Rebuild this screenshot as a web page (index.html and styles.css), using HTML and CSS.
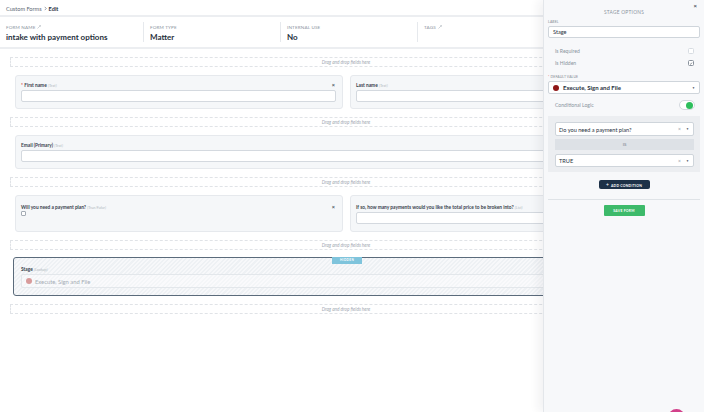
FILE: index.html
```html
<!DOCTYPE html>
<html>
<head>
<meta charset="utf-8">
<title>Edit form</title>
<link rel="stylesheet" href="styles.css">
</head>
<body>
<div class="page">
  <nav class="crumbs">
    <span class="crumb-link">Custom Forms</span>
    <svg class="crumb-sep" viewBox="0 0 4 6" width="3" height="5"><path d="M1 0.8 L3 3 L1 5.2" fill="none" stroke="#5d6773" stroke-width="0.8"/></svg>
    <span class="crumb-cur">Edit</span>
  </nav>

  <header class="meta">
    <div class="meta-col">
      <div class="meta-label">Form Name <svg class="edit-ico" viewBox="0 0 5 5" width="4" height="4"><path d="M0.6 4.4 L4.2 0.8 M2.8 0.7 L4.3 0.7 L4.3 2.2" fill="none" stroke="#9aa3ad" stroke-width="0.6"/></svg></div>
      <div class="meta-value">intake with payment options</div>
    </div>
    <div class="meta-col">
      <div class="meta-label">Form Type</div>
      <div class="meta-value">Matter</div>
    </div>
    <div class="meta-col">
      <div class="meta-label">Internal Use</div>
      <div class="meta-value">No</div>
    </div>
    <div class="meta-col">
      <div class="meta-label">Tags <svg class="edit-ico" viewBox="0 0 5 5" width="4" height="4"><path d="M0.6 4.4 L4.2 0.8 M2.8 0.7 L4.3 0.7 L4.3 2.2" fill="none" stroke="#9aa3ad" stroke-width="0.6"/></svg></div>
      <div class="meta-value"></div>
    </div>
  </header>

  <main class="canvas">
    <div class="dropzone">Drag and drop fields here</div>

    <div class="row">
      <div class="field">
        <div class="field-head"><span class="field-label"><span class="req">*</span> First name <em>(Text)</em></span><span class="remove">×</span></div>
        <div class="input"></div>
      </div>
      <div class="field">
        <div class="field-head"><span class="field-label">Last name <em>(Text)</em></span><span class="remove">×</span></div>
        <div class="input"></div>
      </div>
    </div>

    <div class="dropzone">Drag and drop fields here</div>

    <div class="row">
      <div class="field">
        <div class="field-head"><span class="field-label">Email (Primary) <em>(Text)</em></span></div>
        <div class="input"></div>
      </div>
    </div>

    <div class="dropzone">Drag and drop fields here</div>

    <div class="row row-tall">
      <div class="field">
        <div class="field-head"><span class="field-label">Will you need a payment plan? <em>(True/False)</em></span><span class="remove">×</span></div>
        <div class="checkbox"></div>
      </div>
      <div class="field">
        <div class="field-head"><span class="field-label">If so, how many payments would you like the total price to be broken into? <em>(List)</em></span><span class="remove">×</span></div>
        <div class="input"></div>
      </div>
    </div>

    <div class="dropzone">Drag and drop fields here</div>

    <div class="stage-card">
      <span class="hidden-badge">HIDDEN</span>
      <div class="field-head"><span class="field-label">Stage <em>(Lookup)</em></span></div>
      <div class="stage-input"><span class="dot dot-faded"></span><span>Execute, Sign and File</span></div>
    </div>

    <div class="dropzone">Drag and drop fields here</div>
  </main>
</div>

<aside class="panel">
  <div class="panel-close">×</div>
  <div class="panel-title">Stage Options</div>

  <div class="small-label">Label</div>
  <div class="text-input">Stage</div>

  <div class="opt-row opt-first"><span>Is Required</span><span class="pcheck"></span></div>
  <div class="opt-row"><span>Is Hidden</span><span class="pcheck pcheck-on"><svg viewBox="0 0 6 6" width="5" height="5"><path d="M1.4 3.2 L2.5 4.2 L4.6 1.6" fill="none" stroke="#3a4450" stroke-width="0.8"/></svg></span></div>

  <div class="small-label dv-label"><span class="req">*</span> Default Value</div>
  <div class="select select-main">
    <span class="dot dot-dark"></span><span class="select-text">Execute, Sign and File</span>
    <span class="caret">▼</span>
  </div>

  <div class="opt-row cond-row"><span>Conditional Logic</span><span class="toggle"><span class="knob"></span></span></div>

  <div class="cond-box">
    <div class="select cond-select"><span class="select-text plain">Do you need a payment plan?</span><span class="clear">×</span><span class="caret">▼</span></div>
    <div class="is-bar">IS</div>
    <div class="select cond-select cond-select2"><span class="select-text plain">TRUE</span><span class="clear">×</span><span class="caret">▼</span></div>
  </div>

  <button class="btn-add"><span class="plus">+</span> ADD CONDITION</button>
  <div class="panel-sep"></div>
  <button class="btn-save">SAVE FORM</button>

  <span class="chat-bubble"></span>
</aside>
</body>
</html>
```
FILE: styles.css
```css
* { box-sizing: border-box; margin: 0; padding: 0; }

html, body {
  width: 704px;
  height: 412px;
  overflow: hidden;
  background: #ffffff;
}

body {
  position: relative;
  font-family: Lato, "Open Sans", "Liberation Sans", sans-serif;
  color: #27313d;
}

.page { width: 704px; }

/* breadcrumb */
.crumbs {
  height: 17px;
  display: flex;
  align-items: center;
  gap: 2px;
  padding: 2px 6px 0;
  font-size: 5.6px;
  color: #5d6773;
  border-bottom: 2px solid #eceef1;
}
.crumb-cur { font-weight: 700; color: #27313d; }

/* meta header */
.meta {
  display: flex;
  height: 32px;
  border-bottom: 2px solid #eceef1;
}
.meta-col {
  width: 137px;
  margin: 5px 0 5px;
  padding: 2px 6px 0;
  border-left: 1px solid #e6e9ed;
}
.meta-col:first-child { width: 143px; border-left: 0; }
.meta-label {
  display: flex;
  align-items: center;
  gap: 2px;
  height: 6px;
  font-size: 4.6px;
  letter-spacing: 0.15px;
  text-transform: uppercase;
  color: #8b949e;
}
.meta-value {
  margin-top: 2px;
  height: 10px;
  line-height: 10px;
  font-size: 8px;
  font-weight: 700;
  color: #27313d;
}

/* canvas */
.canvas {
  display: flex;
  flex-direction: column;
  gap: 8px;
  padding: 8px 22px 0 10px;
}
.dropzone {
  height: 10px;
  border: 1px dashed #e0e3e7;
  text-align: center;
  font-size: 4.7px;
  line-height: 8px;
  font-style: italic;
  color: #a3aab3;
}
.row {
  display: flex;
  gap: 7px;
  margin: 0 4px 0 5px;
}
.row-tall .field { min-height: 37px; padding-top: 8px; }

.field {
  flex: 1;
  background: #f5f7f9;
  border: 1px solid #e6e9ed;
  border-radius: 3px;
  padding: 6px 6px 6px 5px;
}
.field-head {
  display: flex;
  justify-content: space-between;
  align-items: center;
  height: 6px;
  padding-right: 1px;
}
.field-label {
  font-size: 4.8px;
  font-weight: 700;
  color: #38414c;
  white-space: nowrap;
}
.field-label em {
  font-weight: 400;
  font-size: 3.9px;
  color: #b3bac2;
}
.req { color: #d9534f; }
.remove {
  font-size: 5.5px;
  font-weight: 700;
  color: #4a5461;
  line-height: 6px;
}
.input {
  margin-top: 2px;
  height: 12px;
  background: #ffffff;
  border: 1px solid #d4d9df;
  border-radius: 2px;
}
.checkbox {
  margin-top: 1px;
  width: 5px;
  height: 5px;
  border: 0.7px solid #a4acb5;
  border-radius: 1px;
  background: #fff;
}

/* stage (hidden) card */
.stage-card {
  position: relative;
  margin: -1px 1px 0 3px;
  height: 39px;
  border: 1px solid #5b6b7b;
  border-radius: 3px;
  padding: 8px 7px 0 7px;
  background: repeating-linear-gradient(135deg, #f7f8fa 0 1.5px, #eef1f4 1.5px 3px);
}
.hidden-badge {
  position: absolute;
  top: -1px;
  left: 50%;
  transform: translateX(-50%);
  width: 30px;
  height: 7px;
  background: #7fc4dc;
  color: #ffffff;
  font-size: 3px;
  font-weight: 700;
  letter-spacing: 0.4px;
  line-height: 7px;
  text-align: center;
}
.stage-input {
  margin-top: 2px;
  height: 14px;
  display: flex;
  align-items: center;
  gap: 3px;
  padding-left: 4px;
  border: 1px solid #e3e7eb;
  border-radius: 2px;
  background: rgba(255, 255, 255, 0.35);
  font-size: 5.8px;
  color: #a6adb5;
}
.dot {
  display: inline-block;
  width: 6px;
  height: 6px;
  border-radius: 50%;
  flex: none;
}
.dot-faded { background: #d89b9b; }
.dot-dark { background: #8e1616; }

/* right panel */
.panel {
  position: absolute;
  top: 0;
  right: 0;
  width: 161px;
  height: 412px;
  background: #f7f8fa;
  border-left: 1px solid #e3e6ea;
  box-shadow: -5px 0 9px rgba(30, 40, 55, 0.06);
  padding: 0 4px 0 4px;
  display: flex;
  flex-direction: column;
}
.panel-close {
  height: 9px;
  padding-top: 2px;
  text-align: right;
  padding-right: 3px;
  font-size: 6px;
  line-height: 7px;
  font-weight: 700;
  color: #4a5461;
}
.panel-title {
  height: 7px;
  line-height: 7px;
  text-align: center;
  font-size: 4.8px;
  letter-spacing: 0.25px;
  text-transform: uppercase;
  color: #8b949e;
}
.small-label {
  margin-top: 4px;
  height: 4px;
  line-height: 4px;
  font-size: 3.4px;
  text-transform: uppercase;
  letter-spacing: 0.15px;
  color: #7d8690;
}
.text-input {
  margin-top: 2px;
  height: 12px;
  background: #ffffff;
  border: 1px solid #cfd5db;
  border-radius: 2px;
  padding-left: 4px;
  font-size: 5.6px;
  line-height: 10px;
  color: #27313d;
}
.opt-row {
  margin-top: 2px;
  height: 10px;
  display: flex;
  justify-content: space-between;
  align-items: center;
  padding: 0 6px 0 7px;
  font-size: 5.1px;
  color: #8a949e;
}
.opt-first { margin-top: 8px; }
.pcheck {
  width: 6px;
  height: 6px;
  border: 0.7px solid #d7dce2;
  border-radius: 1.5px;
  background: #fff;
  display: flex;
  align-items: center;
  justify-content: center;
}
.pcheck-on { border-color: #8a939d; }
.dv-label { margin-top: 7px; }

.select {
  margin-top: 2px;
  height: 13px;
  display: flex;
  align-items: center;
  gap: 4px;
  background: #ffffff;
  border: 1px solid #cfd5db;
  border-radius: 2px;
  padding: 0 4px 0 4px;
}
.select-text {
  flex: 1;
  font-size: 6px;
  font-weight: 700;
  color: #27313d;
  white-space: nowrap;
}
.select-text.plain { font-weight: 400; font-size: 5.6px; }
.caret { font-size: 3px; color: #3a4450; }
.clear { font-size: 5px; color: #8a939d; margin-right: 1px; }

.cond-row { margin-top: 6px; }
.toggle {
  position: relative;
  width: 16px;
  height: 10px;
  border-radius: 5px;
  background: #ffffff;
  border: 0.7px solid #d4d9df;
  margin-right: -1px;
}
.knob {
  position: absolute;
  right: 1px;
  top: 1px;
  width: 7px;
  height: 7px;
  border-radius: 50%;
  background: #2dbe5c;
}

.cond-box {
  margin-top: 6px;
  background: #eceef1;
  padding: 6px 6px 5px 7px;
}
.cond-box .select { margin-top: 0; height: 14px; padding-left: 3px; }
.cond-box .cond-select2 { margin-top: 4px; height: 13px; }
.is-bar {
  margin-top: 3px;
  height: 11px;
  background: #dde1e6;
  text-align: center;
  font-size: 4.4px;
  line-height: 11px;
  color: #6f7985;
}

.btn-add {
  align-self: center;
  margin-top: 8px;
  width: 51px;
  height: 9px;
  border: 0;
  border-radius: 2px;
  background: #1d3148;
  color: #ffffff;
  font-family: inherit;
  font-size: 3.4px;
  font-weight: 700;
  letter-spacing: 0.25px;
}
.plus { font-size: 5px; font-weight: 400; vertical-align: -0.5px; margin-right: 1px; }
.panel-sep {
  margin-top: 10px;
  height: 1px;
  background: #dfe3e7;
}
.btn-save {
  align-self: center;
  margin-top: 5px;
  width: 41px;
  height: 11px;
  border: 0;
  border-radius: 1px;
  background: #3dba6a;
  color: #ffffff;
  font-family: inherit;
  font-size: 3.4px;
  font-weight: 700;
  letter-spacing: 0.25px;
}
.chat-bubble {
  position: absolute;
  left: 124px;
  top: 409px;
  width: 17px;
  height: 17px;
  border-radius: 50%;
  background: #d2408a;
}
```
